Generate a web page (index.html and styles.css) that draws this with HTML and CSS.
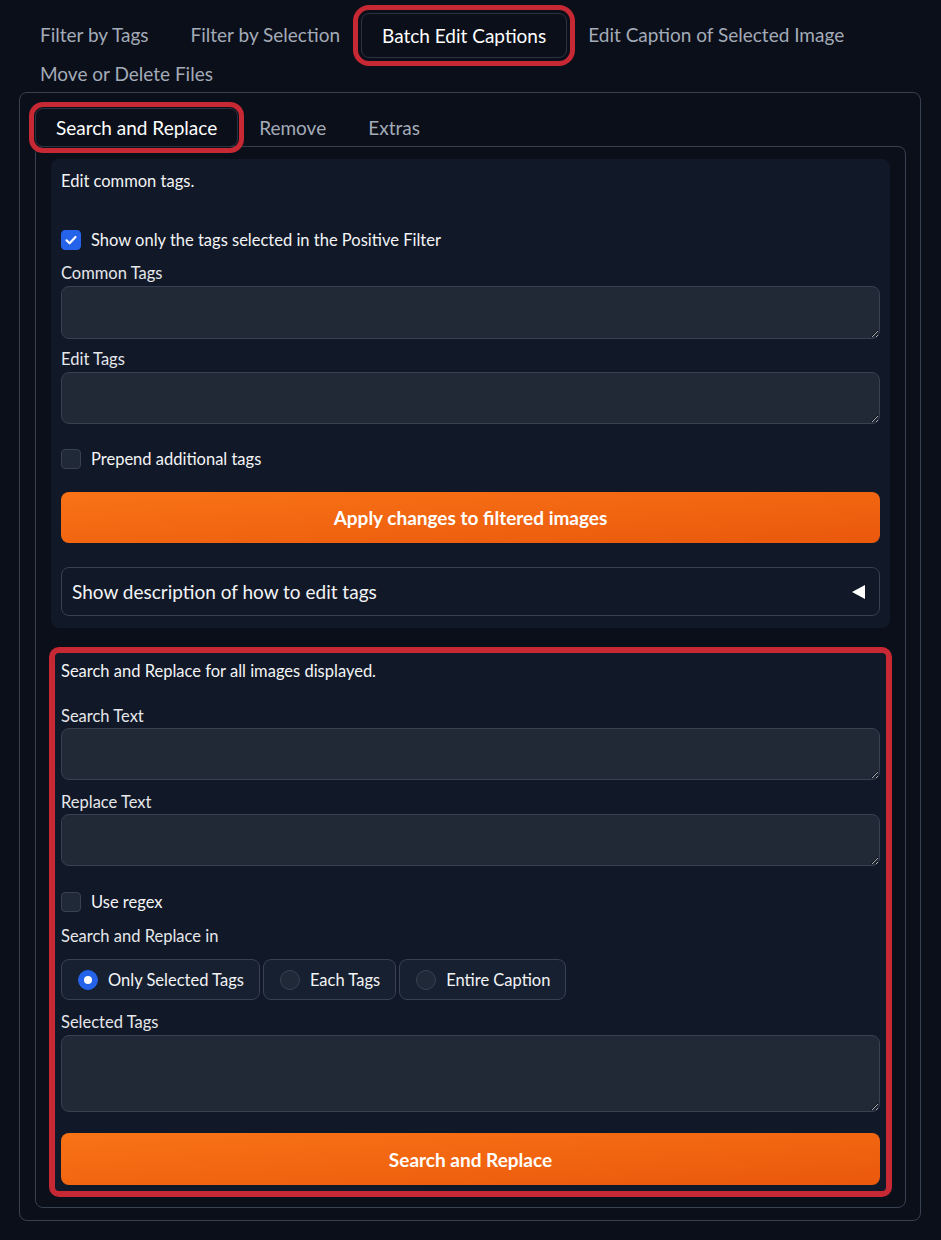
FILE: index.html
```html
<!DOCTYPE html>
<html lang="en">
<head>
<meta charset="utf-8">
<title>Batch Edit Captions</title>
<link rel="stylesheet" href="styles.css">
</head>
<body>
<div class="page">
  <nav class="tabnav top">
    <button class="tab">Filter by Tags</button>
    <button class="tab">Filter by Selection</button>
    <button class="tab selected mark-tab">Batch Edit Captions</button>
    <button class="tab">Edit Caption of Selected Image</button>
    <button class="tab">Move or Delete Files</button>
  </nav>
  <section class="panel outer">
    <nav class="tabnav sub">
      <button class="tab selected mark-sub">Search and Replace</button>
      <button class="tab">Remove</button>
      <button class="tab">Extras</button>
    </nav>
    <section class="panel inner">
      <div class="group">
        <p class="md">Edit common tags.</p>
        <label class="check gap-39"><span class="box checked"><svg viewBox="0 0 20 20" width="20" height="20"><path d="M5.5 10.3 L8.6 13.3 L14.5 7" fill="none" stroke="#fff" stroke-width="2.2" stroke-linecap="round" stroke-linejoin="round"/></svg></span>Show only the tags selected in the Positive Filter</label>
        <div class="label gap-13">Common Tags</div>
        <textarea class="input h53"></textarea>
        <div class="label gap-10">Edit Tags</div>
        <textarea class="input"></textarea>
        <label class="check gap-25"><span class="box"></span>Prepend additional tags</label>
        <button class="primary gap-23">Apply changes to filtered images</button>
        <div class="accordion gap-24"><span>Show description of how to edit tags</span><span class="tri"></span></div>
      </div>
      <div class="group g2 mark-group">
        <p class="md">Search and Replace for all images displayed.</p>
        <div class="label gap-25">Search Text</div>
        <textarea class="input tight"></textarea>
        <div class="label gap-12">Replace Text</div>
        <textarea class="input tight"></textarea>
        <label class="check gap-26"><span class="box"></span>Use regex</label>
        <div class="label gap-14">Search and Replace in</div>
        <div class="radios gap-13">
          <label class="radio"><span class="dot on"></span>Only Selected Tags</label>
          <label class="radio"><span class="dot"></span>Each Tags</label>
          <label class="radio"><span class="dot"></span>Entire Caption</label>
        </div>
        <div class="label gap-12">Selected Tags</div>
        <textarea class="input h77"></textarea>
        <button class="primary gap-21 h52">Search and Replace</button>
      </div>
    </section>
  </section>
</div>
</body>
</html>
```
FILE: styles.css
```css
* { box-sizing: border-box; }
body {
  margin: 0;
  background: #0b0f19;
  color: #f3f4f6;
  font-family: Lato, "Liberation Sans", sans-serif;
  font-size: 16.5px;
}
.page { padding: 15px 20px 18px 19px; }

.tabnav { display: flex; flex-wrap: wrap; align-items: flex-start; }
.tab {
  height: 39px;
  padding: 0 20px;
  background: none;
  border: 1px solid transparent;
  border-radius: 8px;
  color: #a3abb8;
  font-family: inherit;
  font-size: 19px;
  cursor: pointer;
}
.tab.selected { color: #fff; background: #0b0f19; border-color: #2b3341; }
.tabnav.top .tab.selected { height: 45px; margin: -2px 0 -4px; }

.mark-tab { outline: 5px solid #c62834; outline-offset: 3px; }
.mark-sub { outline: 5px solid #c62834; outline-offset: 1px; position: relative; z-index: 1; }

.panel { border: 1px solid #374151; border-radius: 8px; }
.outer { margin-top: -1px; padding: 15px 14px 12px 15px; }
.inner { margin-top: -1px; padding: 12px 15px 12px 15px; }

.group {
  display: flex;
  flex-direction: column;
  background: #111827;
  border-radius: 8px;
  padding: 12px 10px;
}
.g2 { margin-top: 21px; padding-bottom: 10px; }
.mark-group { outline: 6px solid #c62834; outline-offset: -4px; }

.md { margin: 0; line-height: 20px; color: #f3f4f6; }
.label { line-height: 20px; color: #e5e7eb; }

.input {
  display: block;
  width: 100%;
  height: 52px;
  margin-top: 3px;
  background: #212937;
  border: 1px solid #374151;
  border-radius: 8px;
  color-scheme: dark;
  resize: vertical;
  color: #f3f4f6;
  font-family: inherit;
}
.input.tight { margin-top: 2px; }
.h53 { height: 53px; }
.h77 { height: 77px; }

.check { display: flex; align-items: center; gap: 10px; height: 20px; line-height: 20px; color: #f3f4f6; }
.box {
  flex: none;
  width: 20px; height: 20px;
  border-radius: 4px;
  background: #1f2937;
  border: 1px solid #374151;
  display: flex;
}
.box.checked { background: #2563eb; border-color: #2563eb; }
.box svg { margin: -1px; }

.primary {
  width: 100%;
  height: 51px;
  border: none;
  border-radius: 8px;
  background: linear-gradient(to bottom right, #f97316, #ea580c);
  color: #fff;
  font-family: inherit;
  font-size: 19px;
  font-weight: 700;
}
.h52 { height: 52px; }

.accordion {
  height: 49px;
  border: 1px solid #374151;
  border-radius: 8px;
  display: flex;
  align-items: center;
  justify-content: space-between;
  padding: 0 14px 0 10px;
  font-size: 19px;
  color: #f3f4f6;
}
.tri {
  width: 0; height: 0;
  border-top: 7px solid transparent;
  border-bottom: 7px solid transparent;
  border-right: 13px solid #fff;
}

.radios { display: flex; gap: 3px; }
.radio {
  display: flex;
  align-items: center;
  gap: 10px;
  height: 41px;
  padding: 0 15px 0 16px;
  background: #172030;
  border: 1px solid #374151;
  border-radius: 8px;
  color: #f3f4f6;
}
.dot {
  flex: none;
  width: 20px; height: 20px;
  border-radius: 50%;
  background: #1f2937;
  border: 1px solid #374151;
}
.dot.on { background: #2563eb; border-color: #2563eb; position: relative; }
.dot.on::after {
  content: "";
  position: absolute;
  left: 5px; top: 5px;
  width: 8px; height: 8px;
  border-radius: 50%;
  background: #fff;
}

.gap-10 { margin-top: 10px; }
.gap-12 { margin-top: 12px; }
.gap-13 { margin-top: 13px; }
.gap-14 { margin-top: 14px; }
.gap-21 { margin-top: 21px; }
.gap-23 { margin-top: 23px; }
.gap-24 { margin-top: 24px; }
.gap-25 { margin-top: 25px; }
.gap-26 { margin-top: 26px; }
.gap-39 { margin-top: 39px; }
```
